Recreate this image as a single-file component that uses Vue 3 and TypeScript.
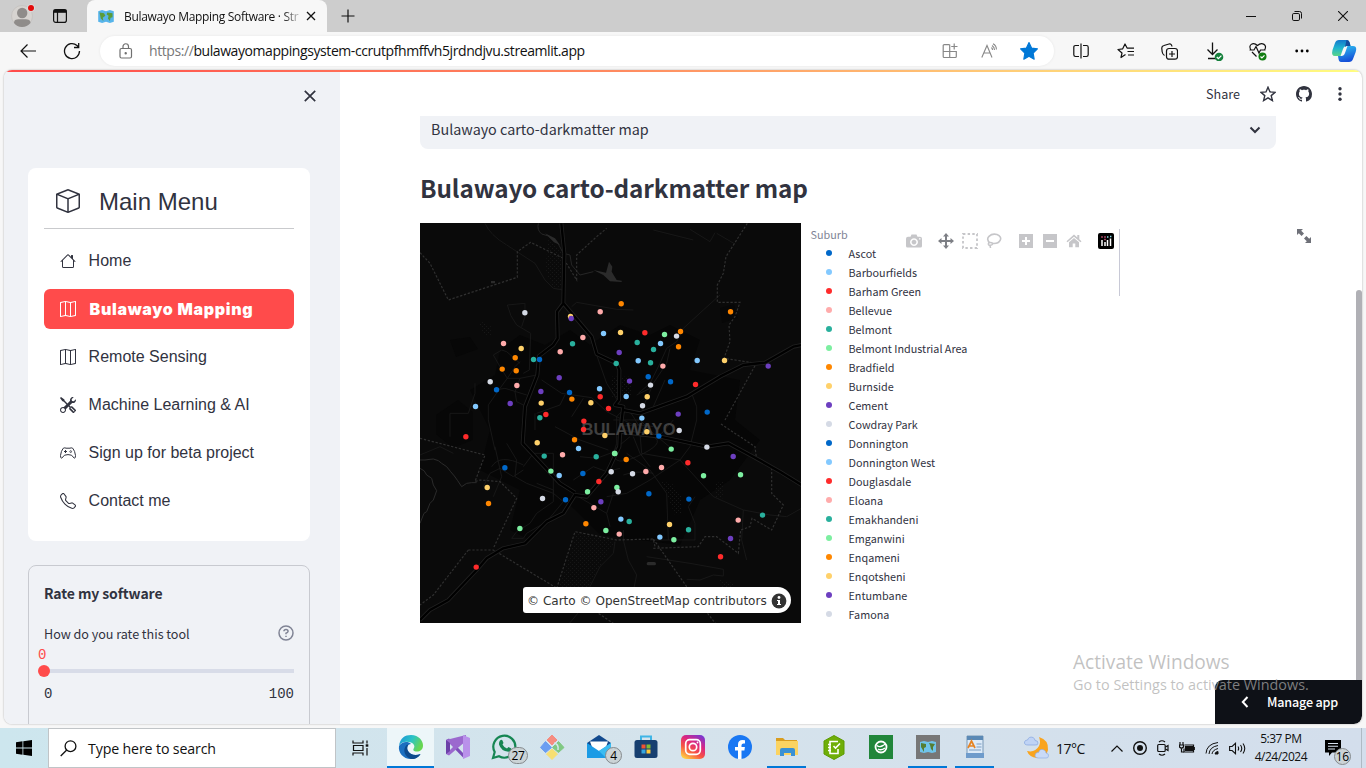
<script setup lang="ts">
interface Tile { x: number; y: number; dots: string }
interface Dot { x: number; y: number; fill: string }
interface MenuItem { label: string; icon: string; active?: boolean }

const palette: Record<string, string> = {
  b: '#0068c9', l: '#83c9ff', r: '#ff2b2b', p: '#ffabab', t: '#29b09d',
  g: '#7defa1', o: '#ff8700', y: '#ffd16a', v: '#6d3fc0', w: '#d5dae5',
}

// Marker positions are stored per map tile, three units to a pixel.
const tiles: Tile[] = [
  { x: 420, y: 220, dots: 'w314,278 y451,289 v453,295 p540,275 l550,340 p488,352 t457,371 p420,395 p250,370 y303,385 o285,413 o246,447 o288,452 t340,418 b358,418 w210,485 b229,509 p290,496 l166,559 v270,550 v362,514 v417,473 b448,517 o455,537 y363,549 t359,593 r377,583 l538,506 r540,530 y512,548 r565,565 r491,603' },
  { x: 610, y: 220, dots: 'o33,251 y31,337 r104,338 t81,367 v27,397 t18,430 l84,422 t130,388 g163,343 l151,370 o211,334 w199,348 o205,380 t121,428 p158,438 b114,470 v58,483 w121,495 b181,485 r256,493 l261,421 y343,421 o361,275 v474,438 l48,529 y111,530 w97,557 v204,582 b291,576 l95,594' },
  { x: 420, y: 420, dots: 'r490,28 y554,46 y351,68 o463,59 l475,85 p427,104 t372,108 t528,110 g584,100 g392,153 l417,166 b488,160 r536,184 g502,215 v542,245 p521,263 w367,235 b436,239 o497,311 g557,331 g299,325 b254,143 y201,202 o205,250 r137,50 r168,441' },
  { x: 610, y: 420, dots: 'y110,35 b146,48 w207,31 w290,81 g183,87 g13,100 o48,118 w3,155 w67,161 p107,154 p154,142 r233,128 g280,167 g391,164 v369,109 g20,202 w24,215 b116,221 b236,237 y178,313 t235,329 l32,297 t57,304 p27,342 l149,351 g191,359 p384,300 t457,285 v361,355 r331,410' },
]

const dots: Dot[] = tiles.flatMap((tile) =>
  tile.dots.split(' ').map((entry) => {
    const [x, y] = entry.slice(1).split(',').map(Number)
    return { x: tile.x + x / 3 + 0.2, y: tile.y + y / 3 + 0.1, fill: palette[entry[0]] }
  }),
)

const cycle = 'blrptgoyvw'
const suburbs = ['Ascot', 'Barbourfields', 'Barham Green', 'Bellevue', 'Belmont', 'Belmont Industrial Area',
  'Bradfield', 'Burnside', 'Cement', 'Cowdray Park', 'Donnington', 'Donnington West', 'Douglasdale', 'Eloana',
  'Emakhandeni', 'Emganwini', 'Enqameni', 'Enqotsheni', 'Entumbane', 'Famona',
].map((name, i) => ({ name, fill: palette[cycle[i % 10]] }))

const icons: Record<string, string> = {
  house: 'M8.707 1.5a1 1 0 0 0-1.414 0L.646 8.146a.5.5 0 0 0 .708.708L2 8.207V13.5A1.5 1.5 0 0 0 3.5 15h9a1.5 1.5 0 0 0 1.5-1.5V8.207l.646.647a.5.5 0 0 0 .708-.708L13 5.793V2.5a.5.5 0 0 0-.5-.5h-1a.5.5 0 0 0-.5.5v1.293zM13 7.207V13.5a.5.5 0 0 1-.5.5h-9a.5.5 0 0 1-.5-.5V7.207l5-5z',
  map: 'M15.817.113A.5.5 0 0 1 16 .5v14a.5.5 0 0 1-.402.49l-5 1a.5.5 0 0 1-.196 0L5.5 15.01l-4.902.98A.5.5 0 0 1 0 15.5v-14a.5.5 0 0 1 .402-.49l5-1a.5.5 0 0 1 .196 0L10.5.99l4.902-.98a.5.5 0 0 1 .415.103M10 1.91l-4-.8v12.98l4 .8zm1 12.98 4-.8V1.11l-4 .8zm-6-.8V1.11l-4 .8v12.98z',
  tools: 'M1 0 0 1l2.2 3.081a1 1 0 0 0 .815.419h.07a1 1 0 0 1 .708.293l2.675 2.675-2.617 2.654A3.003 3.003 0 0 0 0 13a3 3 0 1 0 5.878-.851l2.654-2.617.968.968-.305.914a1 1 0 0 0 .242 1.023l3.27 3.27a.997.997 0 0 0 1.414 0l1.586-1.586a.997.997 0 0 0 0-1.414l-3.27-3.27a1 1 0 0 0-1.023-.242L10.5 9.5l-.96-.96 2.68-2.643A3.005 3.005 0 0 0 16 3q0-.405-.102-.777l-2.14 2.141L12 4l-.364-1.757L13.777.102a3 3 0 0 0-3.675 3.68L7.462 6.46 4.793 3.793a1 1 0 0 1-.293-.707v-.071a1 1 0 0 0-.419-.814zm9.646 10.646a.5.5 0 0 1 .708 0l2.914 2.915a.5.5 0 0 1-.707.707l-2.915-2.914a.5.5 0 0 1 0-.708M3 11l.471.242.529.026.287.445.445.287.026.529L5 13l-.242.471-.026.529-.445.287-.287.445-.529.026L3 15l-.471-.242L2 14.732l-.287-.445L1.268 14l-.026-.529L1 13l.242-.471.026-.529.445-.287.287-.445.529-.026z',
  phone: 'M3.654 1.328a.678.678 0 0 0-1.015-.063L1.605 2.3c-.483.484-.661 1.169-.45 1.77a17.6 17.6 0 0 0 4.168 6.608 17.6 17.6 0 0 0 6.608 4.168c.601.211 1.286.033 1.77-.45l1.034-1.034a.678.678 0 0 0-.063-1.015l-2.307-1.794a.68.68 0 0 0-.58-.122l-2.19.547a1.75 1.75 0 0 1-1.657-.459L5.482 8.062a1.75 1.75 0 0 1-.46-1.657l.548-2.19a.68.68 0 0 0-.122-.58zM1.884.511a1.745 1.745 0 0 1 2.612.163L6.29 2.98c.329.423.445.974.315 1.494l-.547 2.19a.68.68 0 0 0 .178.643l2.457 2.457a.68.68 0 0 0 .644.178l2.189-.547a1.75 1.75 0 0 1 1.494.315l2.306 1.794c.829.645.905 1.87.163 2.611l-1.034 1.034c-.74.74-1.846 1.065-2.877.702a18.6 18.6 0 0 1-7.01-4.42 18.6 18.6 0 0 1-4.42-7.009c-.362-1.03-.037-2.137.703-2.877z',
}

const menu: MenuItem[] = [
  { label: 'Home', icon: 'house' },
  { label: 'Bulawayo Mapping', icon: 'map', active: true },
  { label: 'Remote Sensing', icon: 'map' },
  { label: 'Machine Learning & AI', icon: 'tools' },
  { label: 'Sign up for beta project', icon: 'controller' },
  { label: 'Contact me', icon: 'phone' },
]
</script>

<template>
  <div class="screen">
    <header class="tabs">
      <svg class="avatar" width="26" height="28" viewBox="0 0 26 28">
        <circle cx="11" cy="14" r="10.500" fill="#d6d3d0" stroke="#c2bfbc" stroke-width=".7" />
        <circle cx="11.200" cy="11" r="5.200" fill="#8f8c8a" /><path d="M3 21C3 17.500 5 17.200 11 17.200S19.500 17.500 19.500 21Q16 25 11 25T3 21Z" fill="#8f8c8a" />
        <circle cx="20" cy="6" r="3.800" fill="#dedede" /><circle cx="20" cy="6" r="3" fill="#e30b0b" />
      </svg>
      <svg class="workspaces" width="16" height="16" viewBox="0 0 16 16" fill="none" stroke="#111" stroke-width="1.2">
        <rect x="1.600" y="1.600" width="12.800" height="12.800" rx="2.200" /><path d="M1.600 3.200h12.800" stroke-width="3.200" /><path d="M5.500 4v10" />
      </svg>
      <div class="tab">
        <svg width="16" height="13" viewBox="0 0 24 20"><path d="M0 2l6-2 6 2 6-2 6 2v16l-6 2-6-2-6 2-6-2z" fill="#57b4ea" /><path d="M2 4l7 1 2 4-4 3 1 5-4-4zM14 4l8 1v6l-3 1-1 5-3-4 1-4-3-2z" fill="#5a9c39" /></svg>
        <span class="tab-title">Bulawayo Mapping Software · Str</span>
        <svg width="10" height="10" viewBox="0 0 10 10" stroke="#111" stroke-width="1.3"><path d="M1 1l8 8M9 1l-8 8" /></svg>
      </div>
      <svg class="newtab" width="14" height="14" viewBox="0 0 14 14" stroke="#111" stroke-width="1.2"><path d="M7 .5v13M.500 7h13" /></svg>
      <div class="winbtns">
        <svg width="10" height="10" viewBox="0 0 10 10" stroke="#111"><path d="M0 5.500h10" /></svg>
        <svg width="10" height="10" viewBox="0 0 10 10" fill="none" stroke="#111"><rect x=".5" y="2.500" width="7" height="7" rx="1.300" /><path d="M2.500.5H7.500Q9.500.5 9.500 2.500V7.500" /></svg>
        <svg width="10" height="10" viewBox="0 0 10 10" stroke="#111" stroke-width="1.100"><path d="M0 0l10 10M10 0L0 10" /></svg>
      </div>
    </header>

    <div class="toolbar">
      <svg class="back" width="16" height="14" viewBox="0 0 16 14" fill="none" stroke="#111" stroke-width="1.2"><path d="M16 7H1M7.500.5L1 7l6.500 6.500" /></svg>
      <svg class="reload" width="18" height="18" viewBox="0 0 18 18" fill="none" stroke="#111" stroke-width="1.300"><path d="M16.500 9A7.500 7.500 0 1 1 14 3.500L15.500 5M15.700 1v4.500H11" /></svg>
      <div class="address">
        <svg width="14" height="16" viewBox="0 0 14 16" fill="none" stroke="#707070" stroke-width="1.200"><rect x="1" y="5.500" width="11.500" height="9.500" rx="1.500" /><path d="M4 5.500V3.500a2.750 2.750 0 0 1 5.500 0v2" /><circle cx="6.700" cy="10.300" r=".6" fill="#555" /></svg>
        <span class="url"><i>https://</i>bulawayomappingsystem-ccrutpfhmffvh5jrdndjvu.streamlit.app</span>
        <div class="address-icons">
          <svg width="16" height="16" viewBox="0 0 16 16" fill="none" stroke="#888" stroke-width="1.200"><path d="M7.500 1.600H2.200Q1.200 1.600 1.200 2.600V13.500Q1.200 14.500 2.200 14.500H13.300Q14.300 14.500 14.300 13.500V8.500H1.200M7.700 1.600V14.500M12.200.5V6.500M9.200 3.500H15.500" /></svg>
          <svg width="16" height="16" viewBox="0 0 16 16" fill="none" stroke="#888" stroke-width="1.100"><path d="M.8 14.500L6 2.500l5 12M2.700 10h6.600M10.500 4.500q1 1 1 2.500M11 2.500q2.500 1.500 2.500 4.500M12 .8Q15.400 2.500 15.400 6.500" /></svg>
          <svg width="18" height="18" viewBox="0 0 16 16"><path d="M8 .5l2.300 4.900 5.200.7-3.800 3.700.9 5.500L8 12.700l-4.600 2.600.9-5.500L.5 6.100l5.200-.7z" fill="#0078d7" stroke="#0078d7" stroke-linejoin="round" /></svg>
        </div>
      </div>
      <div class="tools">
        <svg width="16" height="16" viewBox="0 0 16 16" fill="none" stroke="#111" stroke-width="1.200"><path d="M6 2.500H2.500Q.8 2.500.8 4.200v7.600q0 1.700 1.700 1.700H6M10 2.500h3.500q1.700 0 1.700 1.700v7.600q0 1.700-1.700 1.700H10M8 .5v15" /></svg>
        <svg width="17" height="16" viewBox="0 0 17 16" fill="none" stroke="#111" stroke-width="1.200" stroke-linejoin="round"><path d="M8.500 11.500L4 14.500 5 10 1 6.500l4.700-.7L8 1l2.200 4.200M10 5.200h7M10.500 8.500H17M11 12h6" /></svg>
        <svg width="17" height="17" viewBox="0 0 17 17" fill="none" stroke="#111" stroke-width="1.200"><rect x="5.500" y="5.500" width="11" height="10.700" rx="2.500" /><path d="M11 8v6M8 11h6M3.500 12.500Q1.700 11.500 1.200 9L.8 5.500Q.5 3 3 2.500L8 1q2.500-.5 3 2.500" /></svg>
        <svg width="20" height="20" viewBox="0 0 20 20" fill="none" stroke="#111" stroke-width="1.300"><path d="M8.500 1.500v12M3.500 8.500l5 5 5-5M4 17.500h8" /><circle cx="15" cy="16" r="4.300" fill="#15803c" stroke="none" /><path d="M12.800 16l1.600 1.600 3-3" stroke="#fff" /></svg>
        <svg width="20" height="20" viewBox="0 0 20 20" fill="none" stroke="#111" stroke-width="1.200"><path d="M3 9C-.5 4 5 .5 9.500 4.500 14 .5 20 4 16.500 9M1.500 9h4.500L8 5.500l3 6.500 1.500-3h5M4 11l4.500 4.500" /><circle cx="14.500" cy="15.500" r="4" fill="#107c10" stroke="none" /><path d="M12.500 15.500l1.400 1.400 2.600-2.600" stroke="#fff" /></svg>
        <svg width="14" height="4" viewBox="0 0 14 4"><circle cx="1.700" cy="2" r="1.400" /><circle cx="7" cy="2" r="1.400" /><circle cx="12.300" cy="2" r="1.400" /></svg>
      </div>
      <svg class="copilot" width="26" height="24" viewBox="0 0 26 24">
        <defs><linearGradient id="cp1" x1="0" y1="0" x2="0" y2="1"><stop offset="0" stop-color="#1478cc" /><stop offset=".5" stop-color="#1fb4cf" /><stop offset="1" stop-color="#5bd488" /></linearGradient><linearGradient id="cp2" x1="0" y1="0" x2=".3" y2="1"><stop offset="0" stop-color="#2fc4f2" /><stop offset="1" stop-color="#1550d8" /></linearGradient></defs>
        <path d="M8 1h8q2 0 2.800 3l.7 3h-4Q13 7 12 10l-2.500 7H4Q0 17 1.500 11L4 4Q5 1 8 1Z" fill="url(#cp1)" />
        <path d="M18 23h-8q-2 0-2.500-3L7 17h3.500q2.500 0 3.500-3l2.500-7H22q4.500 0 2.700 6L22 20q-1 3-4 3Z" fill="url(#cp2)" />
        <path d="M15.500 1q2.500 0 3.300 3l.7 3h-4l-1.500 1Z" fill="#144b9d" />
      </svg>
    </div>

    <div class="frame">
      <div class="gradient"></div>
      <div class="app">
        <aside class="sidebar">
          <div class="side-head"><svg width="12" height="12" viewBox="0 0 12 12" stroke="#31333f" stroke-width="1.700"><path d="M.8.8l10.400 10.400M11.200.8L.8 11.200" /></svg></div>
          <nav class="menu">
            <div class="menu-title">
              <svg width="24" height="24" viewBox="0 0 16 16" fill="#31333f"><path d="M8.186 1.113a.5.5 0 0 0-.372 0L1.846 3.500 8 5.961 14.154 3.500zM15 4.239l-6.500 2.600v7.922l6.500-2.600V4.240zM7.500 14.762V6.838L1 4.239v7.923zM7.443.184a1.500 1.500 0 0 1 1.114 0l7.129 2.852A.5.5 0 0 1 16 3.500v8.662a1 1 0 0 1-.629.928l-7.185 2.874a.5.5 0 0 1-.372 0L.630 13.090a1 1 0 0 1-.630-.928V3.500a.5.5 0 0 1 .314-.464z" /></svg>
              <span>Main Menu</span>
            </div>
            <div v-for="item in menu" :key="item.label" class="item" :class="{ active: item.active }">
              <svg width="16" height="16" viewBox="0 0 16 16">
                <path v-if="icons[item.icon]" :d="icons[item.icon]" fill="currentColor" />
                <g v-else fill="none" stroke="currentColor">
                  <path d="M3.200 3.300Q5 2.400 6 3.200H10Q11 2.400 12.800 3.300 15 6 15.500 10.500 15.500 13.500 14.300 13.200L11.500 10.200Q8 9 4.500 10.200L1.700 13.200Q.5 13.500.5 10.500 1 6 3.200 3.300Z" />
                  <path d="M5.500 5v3M4 6.500h3" /><circle cx="10.700" cy="6.600" r=".9" stroke-width=".8" />
                </g>
              </svg>
              <span>{{ item.label }}</span>
            </div>
          </nav>
          <section class="rate">
            <h4>Rate my software</h4>
            <div class="question">
              <span>How do you rate this tool</span>
              <svg width="16" height="16" viewBox="0 0 16 16" fill="none" stroke="#808495" stroke-width="1.500"><circle cx="8" cy="8" r="7" /><path d="M5.900 6.300Q6 4.400 8 4.400T10.100 6.300Q10 7.500 8 8.300V9.300M8 10.700v1.400" /></svg>
            </div>
            <div class="value">0</div>
            <div class="track"><span></span></div>
            <div class="range"><span>0</span><span>100</span></div>
          </section>
        </aside>

        <main class="main">
          <div class="app-bar">
            <span>Share</span>
            <svg width="16" height="16" viewBox="0 0 16 16" fill="none" stroke="#31333f" stroke-width="1.400"><path d="M8 1.200l2 4.700 5.100.4-3.900 3.300 1.200 5L8 11.900l-4.400 2.700 1.200-5L.9 6.300 6 5.900z" /></svg>
            <svg width="16" height="16" viewBox="0 0 16 16" fill="#31333f"><path d="M8 0C3.580 0 0 3.580 0 8c0 3.540 2.290 6.530 5.470 7.590.4.070.550-.170.550-.380 0-.190-.010-.820-.010-1.490-2.010.370-2.530-.490-2.690-.940-.090-.230-.480-.940-.820-1.130-.280-.150-.680-.520-.010-.530.630-.010 1.080.580 1.230.820.720 1.210 1.870.870 2.330.660.070-.520.280-.870.510-1.070-1.780-.2-3.640-.890-3.640-3.950 0-.870.310-1.590.820-2.150-.080-.2-.360-1.020.080-2.120 0 0 .670-.210 2.200.820.640-.180 1.320-.270 2-.270s1.360.090 2 .270c1.530-1.040 2.200-.820 2.200-.820.440 1.100.160 1.920.080 2.120.510.560.820 1.270.820 2.150 0 3.070-1.870 3.750-3.650 3.950.290.250.540.730.540 1.480 0 1.070-.010 1.930-.010 2.200 0 .210.150.460.550.380A8.010 8.010 0 0 0 16 8c0-4.420-3.580-8-8-8" /></svg>
            <svg width="16" height="16" viewBox="0 0 16 16" fill="#31333f"><circle cx="8" cy="2.800" r="1.700" /><circle cx="8" cy="8" r="1.700" /><circle cx="8" cy="13.200" r="1.700" /></svg>
          </div>
          <div class="content">
            <div class="select"><span>Bulawayo carto-darkmatter map</span><svg width="12" height="8" viewBox="0 0 12 8" fill="none" stroke="#31333f" stroke-width="2"><path d="M1.500 1.500L6 6l4.500-4.500" /></svg></div>
            <h2>Bulawayo carto-darkmatter map</h2>
            <div class="plot">
              <div class="map">
                <svg width="381" height="400" viewBox="420 223 381 400">
                  <defs><pattern id="stipple" width="12" height="12" patternUnits="userSpaceOnUse"><rect width="3" height="3" fill="#181818" /><rect x="6" y="6" width="3" height="3" fill="#151515" /></pattern></defs>
                  <rect x="420" y="223" width="381" height="400" fill="#0a0a0a" />
                  <path d="M500 350L520 335 545 345 570 330 590 345 620 325 650 335 670 325 700 340 690 370 740 380 735 420 760 440 730 480 700 500 680 545 640 540 600 535 570 505 530 540 510 530 520 490 480 470 490 430 470 390 495 375Z" fill="#060606" />
                  <path d="M436 415l22-15 15 12v28l-20 8-17-14ZM450 340l20-3 8 12-22 8ZM720 308l14-4 4 14-16 5Z" fill="#070707" />
                  <g transform="translate(420 220) scale(.33333)" fill="none">
                    <path d="M385 60L430 100V205H400L375 150ZM175 300L215 320V345H190ZM575 470h60v60h-60ZM900 1080l40 10v40h-30ZM470 940L585 965 550 1020 500 1110H415Z" fill="url(#stipple)" />
                    <path d="M725 785l30 5 30 40v50l-20 5ZM885 790l25-5v50h-25Z" fill="url(#stipple)" />
                    <path d="M355 10Q350 30 365 42L385 48 400 60 415 72 430 100 450 105 455 135 480 165 520 155" stroke="#262626" stroke-width="3" />
                    <path d="M375 40L405 55 420 75 402 67ZM520 150L558 158 567 125 577 140 575 155 590 180 605 182V186L570 184 550 165ZM680 1031q0-5 5-5h18q5 0 5 5t-5 5h-18q-5 0-5-5ZM213 183h12v7h-12Z" fill="#2b2b2b" />
                    <path d="M0 720L15 720 30 718 40 717 55 722 65 730 80 740 92 755 103 768 113 782 125 800 140 790 155 788 170 788M0 745Q15 750 20 765L35 775 40 795 50 812 40 840 30 850 20 875 12 880 0 910" stroke="#2b2b2b" stroke-width="3" />
                    <g stroke="#1b1b1b" stroke-width="2.500">
                      <path d="M195 10Q210 45 260 75L345 130 375 180 400 205 430 210M262 255L315 250V290L305 320M262 255Q270 290 290 315L332 340 328 450 310 460M220 405L245 390 260 395 300 430M220 405L240 440 262 475 240 505 205 555V600L225 690M262 475L285 440 300 425M260 475L300 475 350 465M300 475L285 515 290 545 320 560M225 510L255 505 320 525M165 490V520L145 580H90V650M345 580V630M310 740L340 700 400 700M365 480L425 520 515 533 560 575 650 620M455 590L490 535M350 580L420 555 435 525M310 750L280 770 240 745 210 760 190 800M260 670L290 720 285 770 320 790 400 820 430 845M350 790L400 810 400 845 350 880 330 910 290 935 275 955H310L320 940 380 905 430 845M225 680L245 770 220 830M215 740Q240 700 310 735M0 705L60 680 100 700" />
                      <path d="M455 260L470 247 590 268 640 270M530 405L560 490 595 545M900 225L850 270 790 325 770 365 740 385 720 430 690 490 655 520M750 385L740 430 700 490 670 560 660 640 665 700M890 40L945 72M810 28L870 65 885 38M700 30L820 60M630 650L570 700 530 715 480 710M650 525L690 505M700 560L735 480M815 520L830 560V600L810 680 780 720 690 780 620 820 560 830M690 740L660 700 640 650M665 700L780 720 880 830 970 870 1050 885 1100 890 1180 845 1210 850 1250 890 1290 920M760 600L725 640 660 650M970 870L965 960 980 1020M825 830L805 860 825 910V960H690M610 765Q650 750 700 760M620 700L690 750 740 820 745 960M610 930V960L625 1020 650 1065 630 1160M680 1010L810 1030 910 1048V1068L880 1065 840 1080 800 1078M400 700V830M405 620L480 660 565 690M460 780L520 740 560 755 600 745M585 965L580 1000 540 1040 510 1100M440 1220L490 1160M475 830L560 880 570 920M560 880L580 820" />
                      <path d="M580 600L660 600 700 640 760 690M600 620Q650 610 700 620M590 590Q620 550 640 590T700 650 650 710 590 670Z" />
                    </g>
                    <g stroke="#303030" stroke-width="3.500" stroke-dasharray="7 5">
                      <path d="M0 98L30 130 85 240 292 172V95L332 67 430 115 470 180V105L530 50 560 25M982 10L918 110 910 160 892 195V247H960L945 290 927 315 930 365 912 415 1010 430M1005 437L915 600M0 655L195 705 165 785 180 780 240 785 290 835 220 985M145 990H220L520 1170 610 1230M145 990L40 1125 0 1155M410 1105L465 935 590 960 700 957 705 980M700 957L800 1100 890 1215M700 985L835 980 855 950 890 950 955 1000 962 930 990 920 996 895 1055 930 1090 855 1055 820 1055 740 1010 720 1005 680 900 610" />
                    </g>
                    <path v-for="w in [12, 7]" :key="w" :stroke="w > 10 ? '#202020' : '#000'" :stroke-width="w" stroke-linejoin="round" d="M424 10L433 100 430 250 411 275 413 355 400 375 357 408 352 465 315 560 308 670 420 790 465 818M430 250L515 350 530 402 590 430 598 450 597 540 585 555 610 560 600 640 598 680 560 760 500 830 465 825 430 880 380 905 315 970 250 985 200 1015 170 1050 85 1140 30 1170 0 1200M610 570L660 580 800 530 900 470 970 435 1035 428 1120 380 1145 375M600 635L720 650 860 680 925 670 1000 710 1080 755 1145 795" />
                  </g>
                  <text x="628.500" y="434.500" text-anchor="middle" textLength="94" lengthAdjust="spacingAndGlyphs" class="city">BULAWAYO</text>
                  <circle v-for="(d, i) in dots" :key="i" :cx="d.x" :cy="d.y" r="2.700" :fill="d.fill" />
                </svg>
                <div class="credit"><span>© Carto © OpenStreetMap contributors</span>
                  <svg width="16" height="16" viewBox="0 0 16 16"><circle cx="8" cy="8" r="7.400" fill="#333" /><circle cx="8" cy="4.500" r="1.400" fill="#fff" /><path d="M6 7h3v4h1v1H6v-1h1V8H6Z" fill="#fff" /></svg>
                </div>
              </div>
              <div class="legend">
                <div class="legend-title">Suburb</div>
                <ul><li v-for="s in suburbs" :key="s.name"><svg width="6" height="6" viewBox="0 0 6 6"><circle cx="3" cy="3" r="3" :fill="s.fill" /></svg>{{ s.name }}</li></ul>
              </div>
              <div class="thumb"></div>
              <div class="modebar">
                <svg width="16" height="16" viewBox="0 0 16 16" fill="#c6c6c9"><path fill-rule="evenodd" d="M5.500 1.500h5l1 2.300H14q2 0 2 2V13q0 1.500-1.500 1.500h-13Q0 14.500 0 13V5.800q0-2 2-2h2.500ZM8 5.200a3.900 3.900 0 1 0 .01 0ZM8 6.700a2.400 2.400 0 1 1-.01 0ZM13 5.200v1.300h1.500V5.200Z" /></svg>
                <svg class="gap" width="16" height="16" viewBox="0 0 16 16" fill="#7d7f85"><path d="M8 0l3 3.500H9V7h3.500V5L16 8l-3.500 3V9H9v3.500h2L8 16l-3-3.500h2V9H3.500v2L0 8l3.500-3v2H7V3.500H5Z" /></svg>
                <svg width="16" height="16" viewBox="0 0 16 16" fill="none" stroke="#c6c6c9" stroke-width="1.800"><rect x="1" y="1" width="14" height="14" stroke-dasharray="2.400 2.250" /></svg>
                <svg width="16" height="16" viewBox="0 0 16 16" fill="none" stroke="#c6c6c9" stroke-width="1.600"><path d="M4 10C-2 5 5 0 11 1.500 18 4 14 11 7 10.500 5 9 2 9 2.500 11.500 3 13 6 12.500 7 10.500M3.500 12.500Q4.500 13 4.500 15" /></svg>
                <svg class="gap" width="16" height="16" viewBox="0 0 16 16"><path d="M1 1h14v14H1z" fill="#c6c6c9" /><path d="M8 4v8M4 8h8" stroke="#fff" stroke-width="2" /></svg>
                <svg width="16" height="16" viewBox="0 0 16 16"><path d="M1 1h14v14H1z" fill="#c6c6c9" /><path d="M4 8h8" stroke="#fff" stroke-width="2" /></svg>
                <svg width="16" height="16" viewBox="0 0 16 16" fill="#c6c6c9"><path d="M8 1.500l3.300 3V2h2v4.300l2.200 2-1 1L8 3.800 1.500 9.300l-1-1ZM8 5l5 4.300v5H9.300V10.500H6.700v3.800H3v-5Z" /></svg>
                <svg class="gap" width="16" height="16" viewBox="0 0 16 16"><rect width="16" height="16" rx="2" /><path d="M4 7v6M7 9v4M9.500 7v6M12.500 5.500v7.500" stroke="#fff" stroke-width="1.500" /><path d="M3.300 4h1.400M6.300 4h1.400M6.300 6.500h1.400" stroke="#e25a87" stroke-width="1.300" /><path d="M9 4h1.400M12 3.500h1.400" stroke="#8ee0ee" stroke-width="1.300" /></svg>
              </div>
              <svg class="expand" width="16" height="16" viewBox="0 0 16 16" fill="#6e7078"><path d="M1 1h6L5.200 2.800 8 5.600 5.600 8 2.800 5.200 1 7ZM15 15H9l1.800-1.800L8 10.400 10.400 8l2.800 2.800L15 9Z" /></svg>
            </div>
          </div>
          <div class="scroll"></div>
          <div class="manage"><svg width="8" height="12" viewBox="0 0 8 12" fill="none" stroke="#fff" stroke-width="2"><path d="M6.500 1L1.800 6l4.700 5" /></svg><span>Manage app</span></div>
        </main>
      </div>
    </div>

    <div class="watermark"><div class="wm1">Activate Windows</div><div class="wm2">Go to Settings to activate Windows.</div></div>

    <footer class="taskbar">
      <div class="start"><svg width="16" height="16" viewBox="0 0 16 16"><path d="M0 2.300L6.500 1.300V7.600H0ZM7.300 1.200L16 0V7.600H7.300ZM0 8.400H6.500V14.700L0 13.700ZM7.300 8.400H16V16L7.300 14.800Z" /></svg></div>
      <div class="search"><svg width="17" height="17" viewBox="0 0 17 17" fill="none" stroke="#111" stroke-width="1.300"><circle cx="10.500" cy="6.200" r="5.400" /><path d="M6.700 10L.7 16" /></svg><span>Type here to search</span></div>
      <div class="taskview"><svg width="17" height="16" viewBox="0 0 17 16" fill="none" stroke="#111" stroke-width="1.200"><path d="M1 .5v2.500h10V.5M1 15.500V13h10v2.500M1.500 5.500h9.500v5H1.500ZM15 .5v3M15 8v7.500" /><path d="M13.700 5.500h2.600" stroke-width="2.400" /></svg></div>
      <div class="tasks">
        <div class="task current"><svg width="26" height="26" viewBox="0 0 26 26"><defs><linearGradient id="ed" x1="0" y1="0" x2="1" y2=".4"><stop offset="0" stop-color="#1a91d8" /><stop offset=".55" stop-color="#2bc3c6" /><stop offset="1" stop-color="#67d651" /></linearGradient></defs><path d="M1 12C2 4 7 1 13 1c8 0 12 6 12 10.500 0 4-3 6-6 6-3.500 0-4.500-1.500-3-3.500 1-2 0-4.500-3-5.500C8 7 3 8 1 12Z" fill="url(#ed)" /><path d="M1 12C4 7.500 10 7 13 10c-3 0-4.500 3-3.500 6 2 5 8 6 13 4C20 24 16.500 25 13 25 5 25 0 18.500 1 12Z" fill="#1b6fc0" /><path d="M8.500 11C4 16 7 23 13 25c4 .5 8-2 9.500-5-5 2-11 1-13-4-.5-2-.3-4 1-5.500Z" fill="#0d4a8d" /></svg></div>
        <div class="task"><svg width="26" height="26" viewBox="0 0 26 26"><path d="M1 6l3-1.500L20 21l-1 3.500Z" fill="#7b4db9" /><path d="M1 6v14l3 1.500L21 7V1Z" fill="#9b69ce" /><path d="M1 6l4 3v8l-4 3Z" fill="#6c40a8" /><path d="M5 10l3 3-3 3Z" fill="#d2e6ed" /><path d="M18 1l7 3v18l-7 3Z" fill="#b991ea" /></svg></div>
        <div class="task"><svg width="28" height="28" viewBox="0 0 28 28" fill="none"><path d="M2 25l1.700-6A11 11 0 1 1 8 23.300Z" stroke="#168653" stroke-width="2.200" /><path d="M9 7.500q1.500-1.500 2.500 0l1 2.500-1 1.500q1.500 3 4.500 4l1.500-1.500 2.800 1.500q0 3-3 3.200Q10 18 8 11.500 7.800 9 9 7.500Z" fill="#168653" /></svg><b class="badge">27</b></div>
        <div class="task"><svg width="26" height="26" viewBox="0 0 26 26"><path d="M13 1l5 5-5 5-5-5Z" fill="#f58c80" stroke="#f58c80" stroke-linejoin="round" /><path d="M6.500 7.500l6 6-6 5-5-5Z" fill="#6b9ef1" stroke="#6b9ef1" /><path d="M19.500 7.500l5.500 6-5.500 5-6-5Z" fill="#80c983" stroke="#80c983" /><path d="M13 15l5.500 5-5.500 5.500L7.500 20Z" fill="#f7df72" stroke="#f7df72" /><path d="M15 9q5 1 4 7" stroke="#d5e7ec" stroke-width="1.500" fill="none" /></svg></div>
        <div class="task"><svg width="26" height="24" viewBox="0 0 26 24"><path d="M1 8L13 0l12 8v5H1Z" fill="#124a8e" /><path d="M4 6.500h18l-4 11H8Z" fill="#fff" /><path d="M1 8l12 8 12-8v15H1Z" fill="#1b9be5" /><path d="M13 16L25 8v15H20Z" fill="#3bbcf1" /></svg><b class="badge">4</b></div>
        <div class="task"><svg width="24" height="24" viewBox="0 0 24 24"><path d="M7 6V1.500h10V6" fill="none" stroke="#3fb5e6" stroke-width="2" /><rect x=".5" y="5" width="23" height="18" rx="2.500" fill="#173f70" /><path d="M7.500 9.500h4v4h-4z" fill="#ef5332" /><path d="M12.500 9.500h4v4h-4z" fill="#85ba32" /><path d="M7.500 14.500h4v4h-4z" fill="#36a5df" /><path d="M12.500 14.500h4v4h-4z" fill="#ffc93a" /></svg></div>
        <div class="task"><svg width="24" height="24" viewBox="0 0 24 24" fill="none"><defs><linearGradient id="ig" x1=".2" y1="1" x2=".8" y2="0"><stop stop-color="#ffcf42" /><stop offset=".35" stop-color="#f75442" /><stop offset=".65" stop-color="#dd2680" /><stop offset="1" stop-color="#7c37cf" /></linearGradient></defs><rect width="24" height="24" rx="5" fill="url(#ig)" /><rect x="4.700" y="4.700" width="14.600" height="14.600" rx="4" stroke="#fff" stroke-width="1.700" /><circle cx="12" cy="12" r="3.700" stroke="#fff" stroke-width="1.700" /><circle cx="16.500" cy="7.500" r=".9" fill="#fff" /></svg></div>
        <div class="task"><svg width="24" height="24" viewBox="0 0 24 24"><circle cx="12" cy="12" r="12" fill="#1977f3" /><path d="M10 24v-8.500H7V12h3V9.500Q10 5 14.500 5l2.500.2V8.500h-1.500q-2 0-2 1.800V12h3.400l-.5 3.500h-2.900V24Z" fill="#fff" /></svg></div>
        <div class="task open"><svg width="24" height="22" viewBox="0 0 24 22"><path d="M1 2h7l2 2h12v4H1Z" fill="#d99d1f" /><path d="M1 5h22v14H1Z" fill="#fbd361" /><path d="M5 20v-6q0-2 2-2h11q2 0 2 2v6h-4v-3H9v3Z" fill="#3a91d4" /></svg></div>
        <div class="task"><svg width="22" height="25" viewBox="0 0 22 25" fill="none"><path d="M11 .5l10 5.500v13L11 24.500 1 19V6Z" fill="#6fae08" stroke="#5d9b00" /><path d="M15 14V18.500H7V6.500h8M5 9.500h3M5 12.500h3M5 15.500h3M10.500 11l2 2L17 8.500" stroke="#fff" stroke-width="1.600" /></svg></div>
        <div class="task"><svg width="24" height="24" viewBox="0 0 24 24" fill="none"><path d="M0 0h24v24H0z" fill="#21863a" /><circle cx="12" cy="12" r="5.500" stroke="#fff" stroke-width="1.800" /><path d="M8 10.500q2 2 5 .5t3-2M9 14q3 2 7-1" stroke="#fff" stroke-width="1.400" /></svg></div>
        <div class="task open"><svg width="24" height="24" viewBox="0 0 24 24"><path d="M0 0h24v24H0z" fill="#777" /><path d="M4 7l4-1 4 1 4-1 4 1v10l-4 1-4-1-4 1-4-1Z" fill="#70c4ea" /><path d="M5 8l5 1v3l-2 1v4l-3-5ZM13 8l6 1-2 3v4l-2-2-1-4Z" fill="#557e32" /></svg></div>
        <div class="task open"><svg width="20" height="24" viewBox="0 0 20 24"><path d="M2 1h16v20H2z" fill="#dceaf8" stroke="#7898b6" /><path d="M2 1h16v4H2z" fill="#5b89b5" /><path d="M3 13L6.500 6 10 13M4.500 11h4" stroke="#e58323" stroke-width="1.700" fill="none" /><path d="M11.500 9h5M11.500 12h5M4 15h12" stroke="#7b9dc2" /><path d="M1 18h18v5H1z" fill="#6e9bcb" /></svg></div>
      </div>
      <div class="weather"><svg width="25" height="24" viewBox="0 0 25 24"><path d="M15 1q10 3 9 13-2 9-11 8-8-1-10-7 8 2 12-5 2-4 0-9Z" fill="#f9a41f" /><path d="M4 9q-4 0-3.500-3Q1 4 3.500 4 5 0 9 1.500q2 1 2 3 3 0 3 2.500T11 9Z" fill="#bfd3f5" stroke="#85a5df" stroke-width=".7" /><path d="M14 22q-4-.5-2.500-4 1-2 3-1.500Q16 12 20 14q2 1 2 3 3 .5 2.500 3T22 22Z" fill="#c9daf7" stroke="#91b0e6" stroke-width=".7" /></svg><span>17°C</span></div>
      <div class="tray">
        <svg width="12" height="7" viewBox="0 0 12 7" fill="none" stroke="#111" stroke-width="1.200"><path d="M.5 6.500L6 1l5.500 5.500" /></svg>
        <svg width="14" height="14" viewBox="0 0 14 14" fill="none" stroke="#111" stroke-width="1.400"><circle cx="7" cy="7" r="6.300" /><circle cx="7" cy="7" r="3" fill="#111" stroke="none" /></svg>
        <svg width="12" height="16" viewBox="0 0 12 16" fill="none" stroke="#111" stroke-width="1.200"><rect x=".7" y="4.500" width="7.500" height="7" rx="1" /><path d="M8.500 7l2.500-1.500v5L8.500 9M2 2q3-2.500 6 0M2 14q3 2.500 6 0" /></svg>
        <svg width="16" height="12" viewBox="0 0 16 12" fill="none" stroke="#111" stroke-width="1.200"><path d="M1 0v3M4 0v3M.5 3h4v2q-2 2-4 0ZM2.500 6v4H5" /><path d="M5.500 3h9v7H5V6.500" /><path d="M6.500 4.500h7v4h-7z" fill="#111" /><path d="M15.300 5v3" /></svg>
        <svg width="14" height="14" viewBox="0 0 14 14" fill="none" stroke="#111"><path d="M1 12.500Q1.500 3 13 1.500M4 13Q4.500 6 13 4.500M7 13Q7.500 9 13 7.500" /><path d="M10 13q0-2 3-2.500V13Z" fill="#111" /></svg>
        <svg width="17" height="13" viewBox="0 0 17 13" fill="none" stroke="#111" stroke-width="1.100"><path d="M.6 4.500h2.500L6.500 1.300v10.400L3.100 8.500H.6ZM9 4.500q1.300 2 0 4M11.500 3q2.500 3.500 0 7M14 1.500q3.500 5 0 10" /></svg>
      </div>
      <div class="clock"><span>5:37 PM</span><span>4/24/2024</span></div>
      <div class="notes"><svg width="16" height="16" viewBox="0 0 16 16"><path d="M0 0h16v12.500H7L4 16v-3.500H0Z" /><path d="M3 3.500h10M3 6.300h10M3 9h7" stroke="#d5dfec" stroke-width="1.100" /></svg><b class="badge">16</b></div>
      <div class="peek"></div>
    </footer>
  </div>
</template>

<style>
body { margin: 0; overflow: hidden; }
</style>

<style scoped>
.screen { position: relative; width: 1366px; height: 768px; display: flex; flex-direction: column; overflow: hidden; background: #f7f7f7; color: #31333f; font-family: "Open Sans", "Noto Sans", sans-serif; }
.screen * { box-sizing: border-box; }
svg { display: block; flex: none; }
.tabs { height: 32px; flex: none; display: flex; align-items: center; background: #cdcdcd; }
.avatar { margin-left: 11px; }
.workspaces { margin-left: 15px; }
.tab { width: 240px; height: 32px; margin-left: 19px; padding: 0 11px; display: flex; align-items: center; background: #f7f7f7; border-radius: 8px 8px 0 0; }
.tab-title { flex: 1; margin: 0 2px 0 10px; white-space: nowrap; font-size: 12px; letter-spacing: -.32px; color: #111; mask-image: linear-gradient(90deg, #000 88%, transparent); }
.newtab { margin-left: 14px; }
.winbtns { margin-left: auto; margin-right: 18px; display: flex; gap: 36px; }
.toolbar { height: 38px; flex: none; display: flex; align-items: center; }
.back { margin-left: 20px; }
.reload { margin-left: 27px; }
.address { width: 954px; height: 30px; margin-left: 19px; padding: 0 16px 0 19px; display: flex; align-items: center; border-radius: 15px; background: #fff; box-shadow: 0 0 3px #00000012; }
.url { margin-left: 16px; font-size: 14px; letter-spacing: -.42px; line-height: 20px; color: #111; white-space: nowrap; }
.url i { font-style: normal; color: #777; }
.address-icons { margin-left: auto; display: flex; align-items: center; gap: 23px; }
.tools { margin-left: 5px; width: 265px; display: grid; grid-template-columns: repeat(6, 1fr); place-items: center; }
.copilot { margin-left: 7px; }

.frame { flex: none; width: 1358px; height: 654px; margin-left: 4px; border-radius: 8px; overflow: hidden; background: #fff; box-shadow: 0 0 2px #0005; }
.gradient { height: 2px; background: linear-gradient(90deg, #ff4b4b, #ff8a60 45%, #ffcf78 75%, #fffd80); }
.app { display: flex; height: 652px; font-family: "Noto Sans CJK SC", "Noto Sans", sans-serif; }
.sidebar { width: 336px; flex: none; padding: 0 30px 0 24px; background: #f0f2f6; overflow: hidden; }
.side-head { height: 96px; padding: 18px 0 0 276px; margin-right: -30px; }
.menu { height: 373px; padding: 16px; border-radius: 8px; background: #fff; font-family: "Liberation Sans", Arial, sans-serif; }
.menu-title { height: 45px; margin-bottom: 12px; padding: 0 0 10px 12px; display: flex; align-items: center; gap: 19px; border-bottom: 1px solid #c9cacd; font-size: 24px; }
.menu-title svg { margin-top: -1px; }
.menu-title span { padding-top: 2px; }
.item { height: 40px; margin-bottom: 8px; padding: 0 16px; display: flex; align-items: center; gap: 12.600px; border-radius: 6px; font-size: 16px; }
.item.active { margin: 8px 0; color: #fff; background: #ff4b4b; font-family: Inter, "Liberation Sans", sans-serif; font-weight: 900; letter-spacing: .7px; gap: 13.500px; }
.rate { height: 260px; margin-top: 24px; padding: 15px 15px; border: 1px solid #c8cad0; border-radius: 8px; }
h4 { margin: 0; font-size: 14px; line-height: 24px; font-weight: 700; letter-spacing: -.1px; }
.question { margin-top: 17px; height: 22px; display: flex; align-items: center; justify-content: space-between; font-size: 12.600px; letter-spacing: -.03px; }
.value { margin: 2px 0 0 -6px; height: 18px; font: 14px/18px "Liberation Mono", monospace; color: #ff4b4b; }
.track { height: 12px; margin-top: 1px; display: flex; align-items: center; background: linear-gradient(#d8dce8, #d8dce8) center / 100% 4px no-repeat; }
.track span { width: 12px; height: 12px; margin-left: -6px; border-radius: 50%; background: #ff4b4b; }
.range { margin-top: 8px; display: flex; justify-content: space-between; font: 14px/18px "Liberation Mono", monospace; }

.main { flex: 1; position: relative; }
.app-bar { height: 44px; padding-right: 14px; display: flex; align-items: center; justify-content: flex-end; gap: 20px; font-size: 12.600px; }
.app-bar span { margin-top: -2px; }
.content { width: 856px; margin-left: 80px; }
.select { height: 33px; padding: 0 15px 8px 11px; display: flex; align-items: center; justify-content: space-between; border-radius: 0 0 8px 8px; background: #f0f2f6; font-size: 14.350px; }
.select svg { margin-top: 2px; }
h2 { margin: 22px 0 17px; height: 35px; line-height: 34px; font-size: 24.300px; font-weight: 700; white-space: nowrap; letter-spacing: -.1px; }
.plot { position: relative; height: 400px; display: flex; }
.map { position: relative; width: 381px; height: 400px; background: #0a0a0a; }
.city { font: 700 17px "Liberation Sans", sans-serif; fill: #404040; }
.credit { position: absolute; right: 10px; bottom: 10px; width: 268px; height: 26px; padding: 1px 4px 0 4px; display: flex; align-items: center; justify-content: space-between; border-radius: 3px 13px 13px 3px; background: #fff; font: 12.050px "DejaVu Sans", sans-serif; color: #333; white-space: nowrap; }
.credit span { padding-top: 1px; }
.legend { margin-left: 9.500px; width: 260.500px; font-size: 10.800px; }
.legend-title { height: 21px; line-height: 23px; color: #808495; }
ul { margin: 0; padding: 0; list-style: none; }
li { height: 19px; display: flex; align-items: center; line-height: 19px; white-space: nowrap; }
li svg { margin: -1px 17px 0 15px; }
.thumb { margin: 6px 0 0 48px; width: 1px; height: 67px; background: #c8c9d6; }
.modebar { position: absolute; left: 486px; top: 10px; display: flex; gap: 8px; }
.modebar .gap { margin-left: 8px; }
.expand { position: absolute; left: 876px; top: 5px; }
.scroll { position: absolute; right: 0; top: 218px; width: 6px; height: 400px; border-radius: 3px; background: #b0b0b5; }
.manage { position: absolute; right: 0; bottom: 0; width: 147px; height: 44px; padding: 0 24px 0 26px; display: flex; align-items: center; justify-content: space-between; border-radius: 8px 0 8px 0; background: #0e1117; color: #fff; font-size: 12.600px; font-weight: 500; letter-spacing: -.2px; }
.manage span { margin-top: -2px; }
.watermark { position: absolute; left: 1073px; top: 649px; color: #aaaaaab8; white-space: nowrap; }
.wm1 { font-size: 19.100px; line-height: 26px; }
.wm2 { font-size: 14.400px; line-height: 20px; }

.taskbar { height: 40px; margin-top: 4px; flex: none; display: flex; background: linear-gradient(90deg, #cde6ee, #d5e3ec 50%, #d3deec); color: #111; }
.start { width: 48px; display: grid; place-items: center; }
.search { width: 288px; border: 1px solid #c0c4c7; background: #fff; padding-left: 11px; display: flex; align-items: center; gap: 11px; font-size: 14.200px; letter-spacing: -.14px; }
.taskview { width: 51px; padding-right: 3px; display: grid; place-items: center; }
.tasks { display: grid; grid-template-columns: repeat(13, 47px); }
.task { position: relative; display: grid; place-items: center; border: solid transparent; border-width: 0 4px 2px; }
.open { border-image: none; border-bottom-color: #0078d7; border-width: 0 0 2px; margin: 0 4px; }
.current { border: 0; border-bottom: 2px solid #0078d7; background: #edf6f9; }
.badge { position: absolute; right: -4px; bottom: 2px; min-width: 17px; height: 17px; padding: 0 2.500px; border: 1px solid #858a8d; border-radius: 9px; background: #cbd3d6; color: #000; font-size: 12px; line-height: 15px; font-weight: 500; letter-spacing: -.3px; text-align: center; }
.weather { margin-left: 26px; display: flex; align-items: center; gap: 7px; font-size: 14px; letter-spacing: -.5px; }
.tray { margin-left: 26px; display: flex; align-items: center; gap: 10px; }
.clock { width: 70px; display: flex; flex-direction: column; align-items: center; font-size: 12px; line-height: 18px; padding-top: 2px; letter-spacing: -.5px; }
.notes { position: relative; margin-left: 9px; width: 28px; padding-top: 12px; }
.notes .badge { right: 2px; bottom: 3px; padding: 0 1px; }
.peek { margin: 0 4px 0 auto; width: 1px; background: #aebac4; }
</style>
